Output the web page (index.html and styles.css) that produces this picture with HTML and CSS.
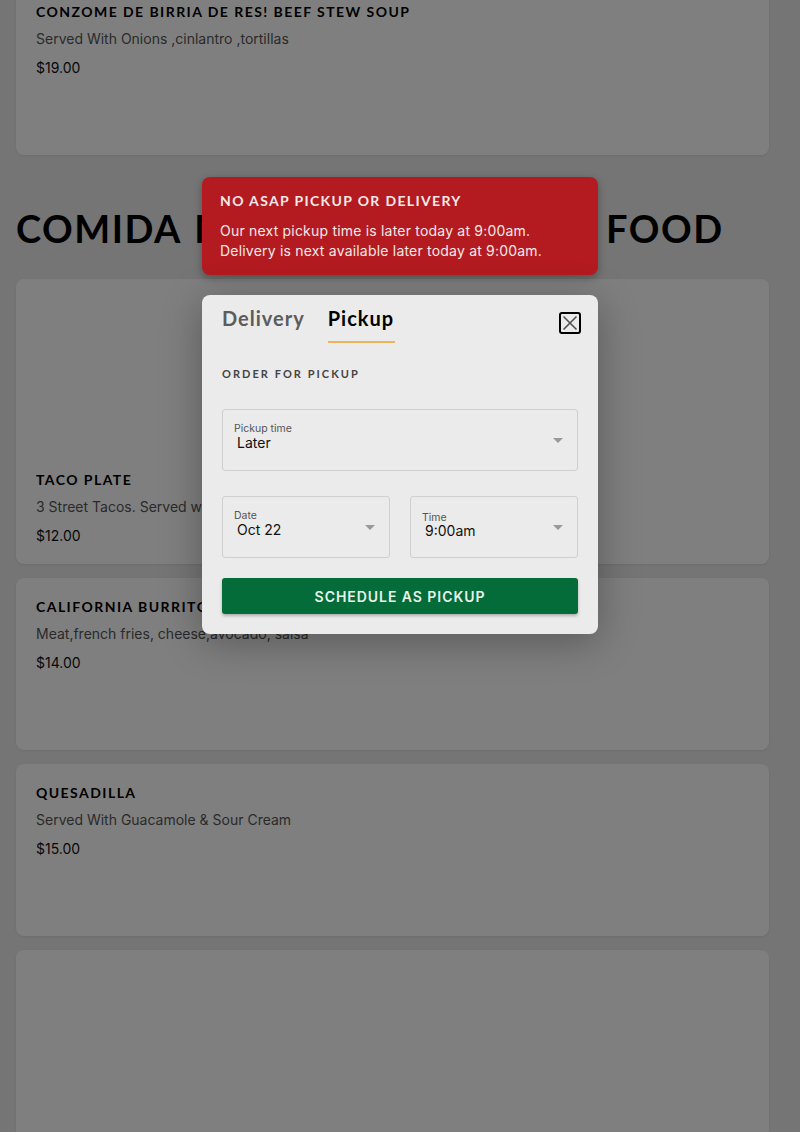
FILE: index.html
```html
<!DOCTYPE html>
<html lang="en">

<head>
  <meta charset="UTF-8">
  <meta name="viewport" content="width=device-width, initial-scale=1.0">
  <title>Order for pickup</title>
  <link rel="stylesheet" href="styles.css">
</head>

<body>
  <main class="menu">
    <section class="card card-first">
      <h4 class="item-name">Conzome de birria de res! Beef stew soup</h4>
      <p class="item-desc">Served With Onions ,cinlantro ,tortillas</p>
      <p class="item-price">$19.00</p>
    </section>

    <h2 class="section-title">Comida Mexicana - Street Food</h2>

    <section class="card card-photo">
      <h4 class="item-name">Taco plate</h4>
      <p class="item-desc">3 Street Tacos. Served with rice and beans</p>
      <p class="item-price">$12.00</p>
    </section>
    <section class="card">
      <h4 class="item-name">California burrito</h4>
      <p class="item-desc">Meat,french fries, cheese,avocado, salsa</p>
      <p class="item-price">$14.00</p>
    </section>
    <section class="card">
      <h4 class="item-name">Quesadilla</h4>
      <p class="item-desc">Served With Guacamole &amp; Sour Cream</p>
      <p class="item-price">$15.00</p>
    </section>
    <section class="card card-last"></section>
  </main>

  <div class="overlay"></div>

  <div class="dialog-wrap">
    <div class="toast">
      <h5 class="toast-title">No ASAP pickup or delivery</h5>
      <p class="toast-text">Our next pickup time is later today at 9:00am.<br>Delivery is next available later today at 9:00am.</p>
    </div>

    <div class="modal">
      <div class="tabs">
        <span class="tab">Delivery</span>
        <span class="tab tab-active">Pickup</span>
        <button class="close" aria-label="Close">
          <svg width="18" height="18" viewBox="0 0 18 18">
            <path d="M2.5 2.5 15.5 15.5M15.5 2.5 2.5 15.5" stroke="#505050" stroke-width="1.6" fill="none" />
          </svg>
        </button>
      </div>

      <h6 class="order-label">Order for pickup</h6>

      <div class="field">
        <div>
          <div class="field-label">Pickup time</div>
          <div class="field-value">Later</div>
        </div>
        <span class="caret"></span>
      </div>

      <div class="field-row">
        <div class="field">
          <div>
            <div class="field-label">Date</div>
            <div class="field-value">Oct 22</div>
          </div>
          <span class="caret"></span>
        </div>
        <div class="field">
          <div>
            <div class="field-label field-label-low">Time</div>
            <div class="field-value">9:00am</div>
          </div>
          <span class="caret"></span>
        </div>
      </div>

      <button class="submit">Schedule as pickup</button>
    </div>
  </div>
</body>

</html>
```

FILE: styles.css
```css
* {
  box-sizing: border-box;
}

html,
body {
  margin: 0;
  height: 1132px;
  overflow: hidden;
}

body {
  background: #ebebeb;
  font-family: 'Inter', 'Noto Sans', sans-serif;
  position: relative;
}

.menu {
  padding: 0 31px 0 16px;
  display: flex;
  flex-direction: column;
  gap: 14px;
  height: 1132px;
  overflow: hidden;
}

.card {
  background: white;
  border-radius: 8px;
  height: 172px;
  padding: 20px;
  box-shadow: 0 1px 3px rgba(0, 0, 0, .08);
  flex-shrink: 0;
}

.card-first {
  height: 155px;
  border-radius: 0 0 8px 8px;
  padding-top: 3px;
}

.card-photo {
  height: 285px;
  padding-top: 192px;
}

.card-last {
  height: 300px;
}

.item-name {
  margin: 0;
  font-family: 'Lato', sans-serif;
  font-size: 14px;
  line-height: 17px;
  font-weight: 700;
  letter-spacing: 1.45px;
  text-transform: uppercase;
  color: black;
}

.item-desc {
  margin: 9px 0 0;
  font-size: 14px;
  line-height: 19px;
  color: #555;
}

.item-price {
  margin: 10px 0 0;
  font-size: 14px;
  line-height: 19px;
  color: #111;
}

.section-title {
  margin: 35px 0 13px;
  font-family: 'Lato', sans-serif;
  font-size: 38px;
  line-height: 48px;
  font-weight: 700;
  letter-spacing: 1.5px;
  word-spacing: 3px;
  text-transform: uppercase;
  white-space: nowrap;
  color: black;
}

.overlay {
  position: absolute;
  inset: 0;
  background: rgba(0, 0, 0, .5);
}

.dialog-wrap {
  position: absolute;
  left: 202px;
  top: 177px;
  width: 396px;
  display: flex;
  flex-direction: column;
  gap: 20px;
}

.toast {
  background: #b31b20;
  border-radius: 8px;
  height: 98px;
  padding: 15px 18px;
  color: #f5e9e9;
  box-shadow: 0 3px 8px rgba(0, 0, 0, .3);
}

.toast-title {
  margin: 0;
  font-family: 'Lato', sans-serif;
  font-size: 14px;
  line-height: 17px;
  font-weight: 700;
  letter-spacing: 1.35px;
  text-transform: uppercase;
}

.toast-text {
  margin: 12px 0 0;
  font-size: 14px;
  line-height: 20px;
  letter-spacing: .2px;
}

.modal {
  background: #ebebeb;
  border-radius: 8px;
  height: 339px;
  padding: 0 20px 20px;
  box-shadow: 0 8px 40px rgba(0, 0, 0, .3);
}

.tabs {
  display: flex;
  gap: 23px;
  height: 48px;
  position: relative;
}

.tab {
  font-family: 'Lato', sans-serif;
  font-size: 20px;
  line-height: 46px;
  font-weight: 700;
  letter-spacing: 1px;
  color: #5c5c5c;
}

.tab-active {
  color: black;
  border-bottom: 2px solid #eeb45c;
  padding-right: 1px;
}

.close {
  position: absolute;
  right: -3px;
  top: 17px;
  width: 22px;
  height: 22px;
  padding: 0;
  display: flex;
  align-items: center;
  justify-content: center;
  background: transparent;
  border: 2px solid black;
  border-radius: 3px;
}

.order-label {
  margin: 24px 0 28px;
  font-family: 'Lato', sans-serif;
  font-size: 11px;
  line-height: 14px;
  font-weight: 700;
  letter-spacing: 2.05px;
  text-transform: uppercase;
  color: #444;
}

.field {
  height: 62px;
  border: 1px solid #cfcfcf;
  border-radius: 3px;
  padding: 13px 14px 0 11px;
  display: flex;
  justify-content: space-between;
}

.field-row {
  display: grid;
  grid-template-columns: 1fr 1fr;
  gap: 20px;
  margin: 25px 0 20px;
}

.field-label {
  font-size: 10.5px;
  line-height: 12px;
  color: #555;
}

.field-label-low {
  padding-top: 2px;
  margin-bottom: -2px;
}

.field-value {
  font-size: 14px;
  line-height: 17px;
  margin: -1px 0 0 3px;
  color: #111;
}

.caret {
  width: 0;
  height: 0;
  margin-top: 15px;
  border-left: 5px solid transparent;
  border-right: 5px solid transparent;
  border-top: 5px solid #999;
}

.submit {
  display: block;
  width: 100%;
  height: 36px;
  background: #046c38;
  border: none;
  border-radius: 3px;
  font-family: 'Inter', sans-serif;
  font-size: 14px;
  font-weight: 600;
  letter-spacing: .95px;
  text-transform: uppercase;
  color: #e8f3ec;
  box-shadow: 0 2px 3px rgba(0, 0, 0, .25);
}
```
